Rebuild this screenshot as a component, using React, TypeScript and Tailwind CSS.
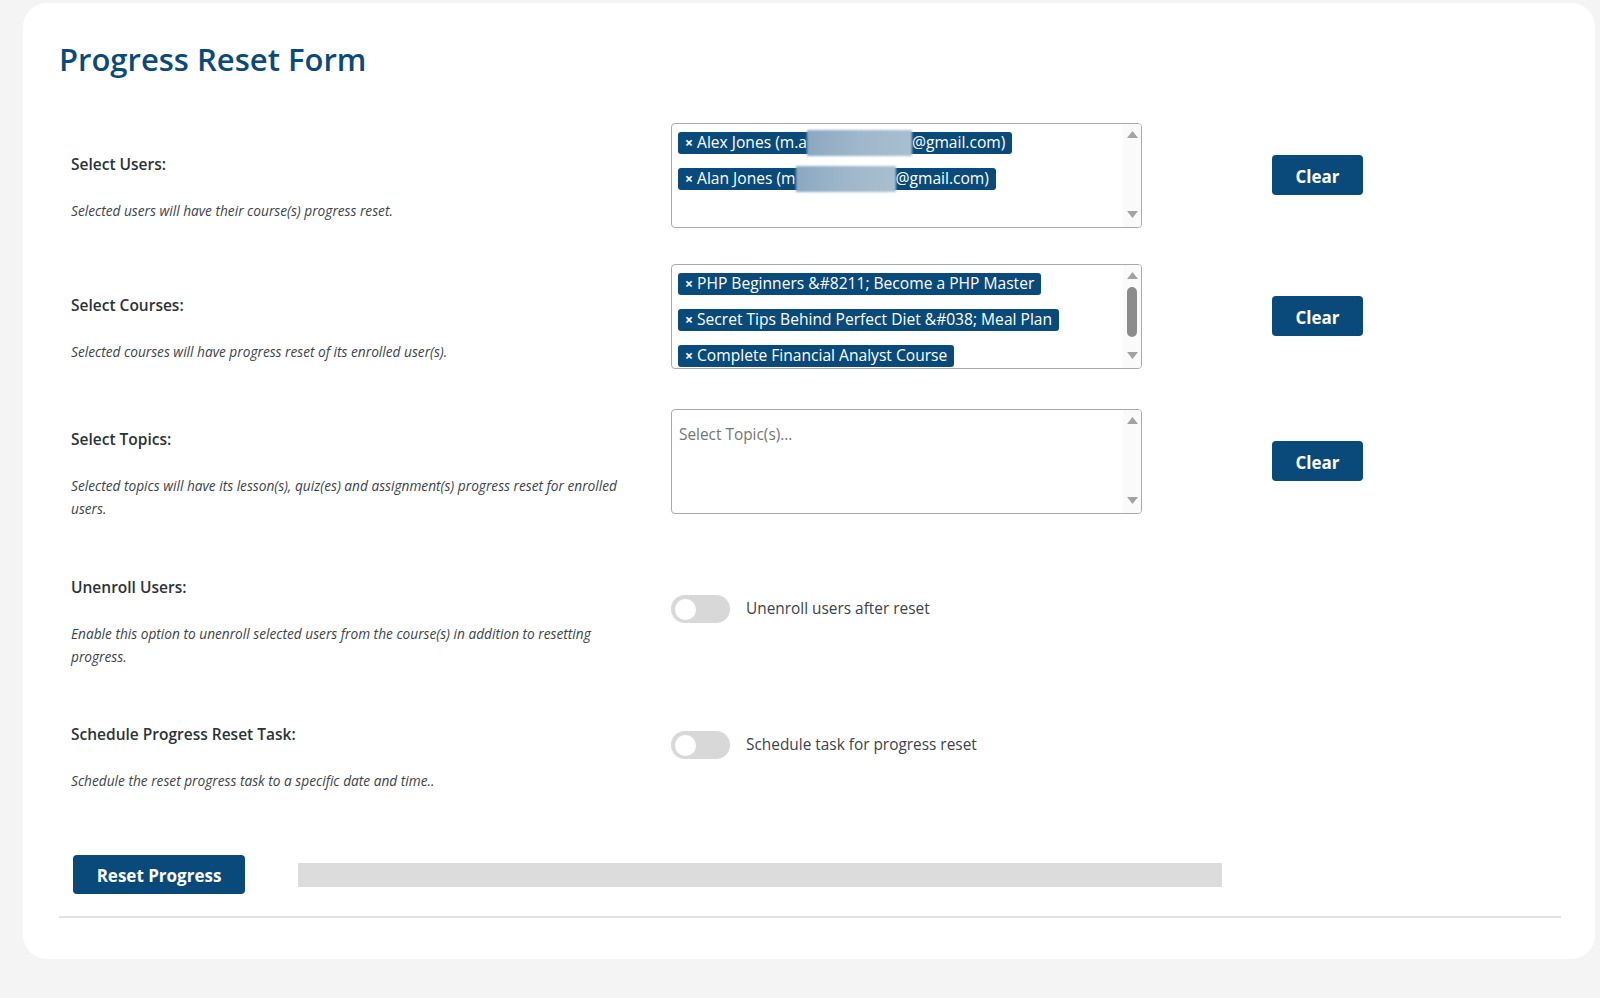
import React from "react";

const font = { fontFamily: '"Open Sans", "Noto Sans", sans-serif' };

const ArrowUp = () => (
  <svg width="11" height="7" viewBox="0 0 11 7">
    <path d="M0 7 L5.5 0 L11 7 Z" fill="#a3a3a3" />
  </svg>
);

const ArrowDown = () => (
  <svg width="11" height="7" viewBox="0 0 11 7">
    <path d="M0 0 L11 0 L5.5 7 Z" fill="#a3a3a3" />
  </svg>
);

const Scrollbar = ({ thumb = false }: { thumb?: boolean }) => (
  <div className="absolute right-0 top-0 bottom-0 w-[18px] bg-[#fafafa] flex flex-col items-center justify-between pt-[7px] pb-[9px]">
    <ArrowUp />
    {thumb && <div className="absolute top-[22px] left-[4px] w-[10px] h-[50px] rounded-full bg-[#8c8c8c]" />}
    <ArrowDown />
  </div>
);

const Tag = ({ children }: { children: React.ReactNode }) => (
  <div className="flex">
    <span className="flex items-center h-[22px] px-[7px] rounded-[3px] bg-[#0a4a7a] text-white text-[15.6px] leading-none whitespace-nowrap">
      <span className="font-bold text-[14px] mr-[4px]">×</span>
      {children}
    </span>
  </div>
);

const Blur = ({ w }: { w: number }) => (
  <span
    className="inline-block h-[26px] bg-gradient-to-r from-[#8ba8c1] via-[#9fb7cb] to-[#a9bfd0] blur-[1px]"
    style={{ width: w }}
  />
);

const ClearButton = () => (
  <button className="ml-[130px] w-[91px] h-[40px] pt-[3px] rounded-[4px] bg-[#0a4a7a] text-white text-[17px] font-bold">
    Clear
  </button>
);

const Label = ({ title, desc }: { title: string; desc: string }) => (
  <div className="w-[612px] pl-[12px] pr-[36px] pt-6">
    <div className="text-[15.5px] font-semibold leading-6 text-[#2c3338]">{title}</div>
    <div className="mt-[23px] text-[13.7px] italic leading-[23px] text-[#3c434a]">{desc}</div>
  </div>
);

const Toggle = ({ label }: { label: string }) => (
  <div className="flex items-center">
    <div className="w-[59px] h-[28px] rounded-full bg-[#d8d8d8] flex items-center pl-[4px]">
      <div className="w-[21px] h-[21px] rounded-full bg-white" />
    </div>
    <span className="ml-[16px] text-[15.4px] text-[#3c434a]">{label}</span>
  </div>
);

export default function App() {
  return (
    <div className="min-h-screen bg-[#f4f4f4] pt-[3px] pl-[23px] pr-[5px]" style={font}>
      <div className="h-[956px] bg-white rounded-[24px] pl-[36px] pr-[34px]">
        <h1 className="pt-[36px] h-[102px] text-[31px] font-semibold leading-[40px] text-[#0a4a7a]">
          Progress Reset Form
        </h1>

        <div className="flex items-center h-[140px]">
          <Label title="Select Users:" desc="Selected users will have their course(s) progress reset." />
          <div className="relative w-[471px] h-[105px] border border-[#a9a9a9] rounded-[4px] overflow-hidden">
            <div className="flex flex-col gap-[14px] pl-[6px] pt-[8px]">
              <Tag>
                Alex Jones (m.a<Blur w={105} />@gmail.com)
              </Tag>
              <Tag>
                Alan Jones (m<Blur w={100} />@gmail.com)
              </Tag>
            </div>
            <Scrollbar />
          </div>
          <ClearButton />
        </div>

        <div className="flex items-center h-[142px]">
          <Label title="Select Courses:" desc="Selected courses will have progress reset of its enrolled user(s)." />
          <div className="relative w-[471px] h-[105px] border border-[#a9a9a9] rounded-[4px] overflow-hidden">
            <div className="flex flex-col gap-[14px] pl-[6px] pt-[8px]">
              <Tag>PHP Beginners &amp;#8211; Become a PHP Master</Tag>
              <Tag>Secret Tips Behind Perfect Diet &amp;#038; Meal Plan</Tag>
              <Tag>Complete Financial Analyst Course</Tag>
            </div>
            <Scrollbar thumb />
          </div>
          <ClearButton />
        </div>

        <div className="flex items-center h-[148px]">
          <Label
            title="Select Topics:"
            desc="Selected topics will have its lesson(s), quiz(es) and assignment(s) progress reset for enrolled users."
          />
          <div className="relative w-[471px] h-[105px] border border-[#a9a9a9] rounded-[4px] overflow-hidden">
            <div className="pl-[7px] pt-[13px] text-[15.4px] text-[#757575]">Select Topic(s)...</div>
            <Scrollbar />
          </div>
          <ClearButton />
        </div>

        <div className="flex items-center h-[148px]">
          <Label
            title="Unenroll Users:"
            desc="Enable this option to unenroll selected users from the course(s) in addition to resetting progress."
          />
          <Toggle label="Unenroll users after reset" />
        </div>

        <div className="flex items-center h-[124px]">
          <Label title="Schedule Progress Reset Task:" desc="Schedule the reset progress task to a specific date and time.." />
          <Toggle label="Schedule task for progress reset" />
        </div>

        <div className="flex items-center mt-[48px]">
          <button className="ml-[14px] w-[172px] h-[39px] pt-[3px] rounded-[4px] bg-[#0a4a7a] text-white text-[17px] font-bold">
            Reset Progress
          </button>
          <div className="ml-[53px] w-[924px] h-[24px] bg-[#dcdcdc]" />
        </div>

        <div className="mt-[22px] h-[2px] bg-[#e2e2e2]" />
      </div>
    </div>
  );
}
